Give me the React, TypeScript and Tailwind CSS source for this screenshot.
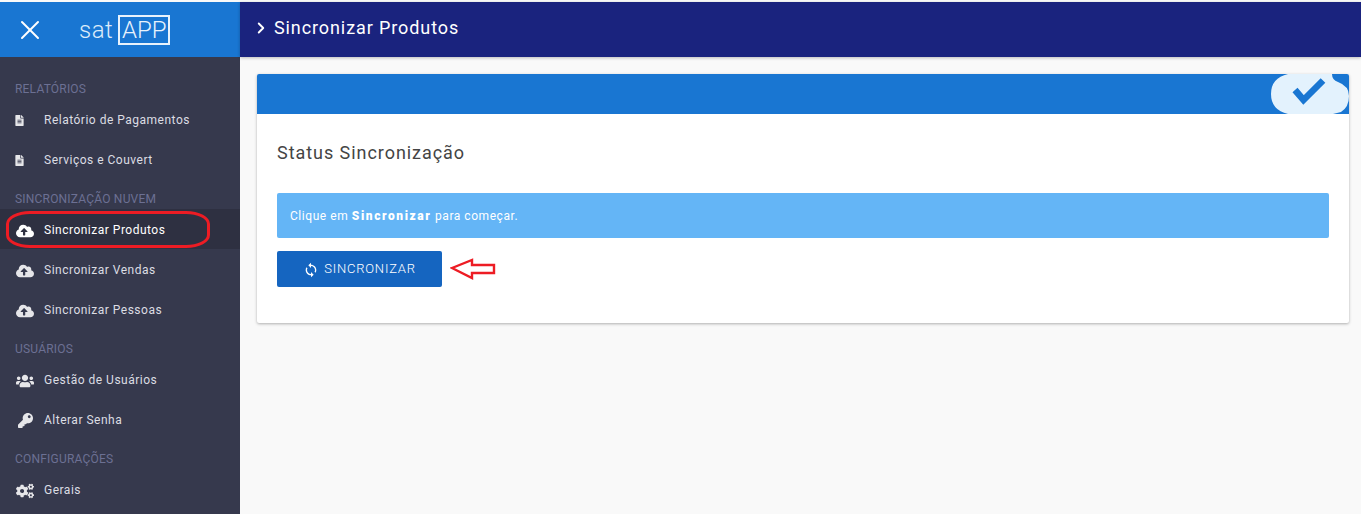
import React from 'react';
import { X, ChevronRight } from 'lucide-react';
import { FaFileAlt, FaCloudUploadAlt, FaUsers, FaKey, FaCogs } from 'react-icons/fa';
import { MdSync } from 'react-icons/md';

const menu = [
    {
        title: 'RELATÓRIOS',
        items: [
            { label: 'Relatório de Pagamentos', icon: FaFileAlt, iconClass: 'ml-[-2px] text-[11px]' },
            { label: 'Serviços e Couvert', icon: FaFileAlt, iconClass: 'ml-[-2px] text-[11px]' },
        ],
    },
    {
        title: 'SINCRONIZAÇÃO NUVEM',
        items: [
            { label: 'Sincronizar Produtos', icon: FaCloudUploadAlt, iconClass: 'text-[18px]', active: true },
            { label: 'Sincronizar Vendas', icon: FaCloudUploadAlt, iconClass: 'text-[18px]' },
            { label: 'Sincronizar Pessoas', icon: FaCloudUploadAlt, iconClass: 'text-[18px]' },
        ],
    },
    {
        title: 'USUÁRIOS',
        items: [
            { label: 'Gestão de Usuários', icon: FaUsers, iconClass: 'text-[18px]' },
            { label: 'Alterar Senha', icon: FaKey, iconClass: 'ml-[2px] text-[15px]' },
        ],
    },
    {
        title: 'CONFIGURAÇÕES',
        items: [{ label: 'Gerais', icon: FaCogs, iconClass: 'text-[18px]' }],
    },
];

const App: React.FC = () => {
    return (
        <div className="h-[514px] w-[1361px] overflow-hidden bg-[#f9f9f9] pt-[2px] font-['Roboto',sans-serif]">
            <div className="flex h-[512px]">
                <aside className="flex w-[240px] shrink-0 flex-col bg-[#36394d]">
                    <div className="flex h-[55px] shrink-0 items-center bg-[#1976d2] pl-[14px] text-white">
                        <X size={32} strokeWidth={1.5} />
                        <div className="ml-[33px] flex items-center">
                            <span className="text-[24px] leading-none font-light tracking-[0.5px] text-[#dcebfa]">sat</span>
                            <span className="ml-[5px] flex h-[30px] w-[52px] items-center justify-center border-2 border-[#e8f2fc] text-[24px] leading-none font-light text-[#e8f2fc]">
                                APP
                            </span>
                        </div>
                    </div>
                    <nav className="flex flex-col pt-[12px]">
                        {menu.map((group) => (
                            <div key={group.title} className="flex flex-col">
                                <div className="flex h-[30px] items-end pb-[1px] pl-[15px] text-[12px] tracking-[0.2px] text-[#6c7093]">
                                    {group.title}
                                </div>
                                {group.items.map((item) => {
                                    const Icon = item.icon;
                                    return (
                                        <div
                                            key={item.label}
                                            className={`relative flex h-[40px] items-center ${item.active ? 'bg-[#2e3041] text-white' : 'text-[#dcdde3]'}`}
                                        >
                                            <div className={`flex w-[44px] shrink-0 items-center pl-[16px] ${item.active ? 'text-white' : 'text-[#e6e6e9]'}`}>
                                                <Icon className={`mt-[3px] ${item.iconClass}`} />
                                            </div>
                                            <span className="mt-[2px] text-[12px] tracking-[0.5px]">{item.label}</span>
                                            {item.active && (
                                                <div className="absolute top-[2px] left-[6px] h-[37px] w-[204px] rounded-[24px/13px] border-[3px] border-[#ed1c24]" />
                                            )}
                                        </div>
                                    );
                                })}
                            </div>
                        ))}
                    </nav>
                </aside>
                <div className="flex min-w-0 flex-1 flex-col">
                    <header className="flex h-[55px] shrink-0 items-center bg-[#1a237e] pb-[4px] pl-[12px] text-white shadow-[0_1px_3px_rgba(0,0,0,0.25)]">
                        <ChevronRight size={18} strokeWidth={2.5} />
                        <h1 className="ml-[4px] text-[18px] font-normal tracking-[0.9px]">Sincronizar Produtos</h1>
                    </header>
                    <main className="px-[12px] pt-[17px] pl-[17px]">
                        <section className="h-[249px] rounded-[2px] bg-white shadow-[0_1px_3px_rgba(0,0,0,0.3)]">
                            <div className="flex h-[40px] justify-end overflow-hidden rounded-t-[2px] bg-[#1976d2]">
                                <svg width="78" height="40" viewBox="0 0 78 40">
                                    <path d="M17 0 H61 Q61 6 67 8 Q78 12 78 22 Q78 33 70 38 L62 40 H17 Q0 36 0 20 Q0 4 17 0 Z" fill="#e3f2fd" />
                                    <polyline points="24,16 32.5,26 52,6.5" fill="none" stroke="#1976d2" strokeWidth="6.6" />
                                </svg>
                            </div>
                            <div className="px-[20px]">
                                <h2 className="pt-[27px] text-[18px] leading-[24px] font-normal tracking-[0.95px] text-[#444]">Status Sincronização</h2>
                                <div className="mt-[28px] flex h-[45px] items-center rounded-[2px] bg-[#64b5f6] pl-[13px] text-[12px] tracking-[0.55px] text-white">
                                    <span>
                                        Clique em <b className="font-black tracking-[1.6px]">Sincronizar</b> para começar.
                                    </span>
                                </div>
                                <div className="mt-[13px] flex items-center">
                                    <button className="flex h-[36px] w-[165px] items-center justify-center gap-[5px] rounded-[2px] bg-[#1565c0] text-[13px] font-light tracking-[0.8px] text-white">
                                        <MdSync size={16} className="mt-[2px]" />
                                        SINCRONIZAR
                                    </button>
                                    <svg width="48" height="24" viewBox="0 0 48 24" className="ml-[8px]">
                                        <path d="M2 11 L22 3 V8 H44 V16 H22 V21 Z" fill="#fff" stroke="#ed1c24" strokeWidth="2.4" />
                                    </svg>
                                </div>
                            </div>
                        </section>
                    </main>
                </div>
            </div>
        </div>
    );
};

export default App;
